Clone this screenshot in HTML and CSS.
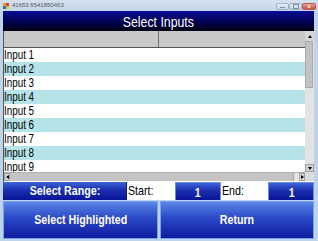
FILE: index.html
```html
<!DOCTYPE html>
<html>
<head>
<meta charset="utf-8">
<link rel="stylesheet" href="styles.css">
</head>
<body>
<div class="titlebar">
  <span class="appicon"><span class="sq a"></span><span class="sq b"></span><span class="sq c"></span><span class="sq d"></span></span>
  <span class="ttext">41653.6541850463</span>
  <span class="wbtns">
    <span class="wb min"><span class="minbar"></span></span>
    <span class="wb max"><span class="maxbox"></span></span>
    <span class="wb close">×</span>
  </span>
</div>
<div class="window">
  <div class="header"><span class="nar c">Select Inputs</span></div>
  <div class="grid">
    <div class="body">
      <div class="colhead"><div class="ch c1"></div><div class="ch c2"></div></div>
      <div class="rows">
        <div class="row"><span class="nar l">Input 1</span></div>
        <div class="row alt"><span class="nar l">Input 2</span></div>
        <div class="row"><span class="nar l">Input 3</span></div>
        <div class="row alt"><span class="nar l">Input 4</span></div>
        <div class="row"><span class="nar l">Input 5</span></div>
        <div class="row alt"><span class="nar l">Input 6</span></div>
        <div class="row"><span class="nar l">Input 7</span></div>
        <div class="row alt"><span class="nar l">Input 8</span></div>
        <div class="row"><span class="nar l">Input 9</span></div>
      </div>
    </div>
    <div class="vscroll">
      <div class="arrow up"><span class="tri-up"></span></div>
      <div class="vthumb"></div>
      <div class="vtrack"></div>
      <div class="arrow down"><span class="tri-down"></span></div>
    </div>
    <div class="hscroll">
      <div class="harrow"><span class="tri-left"></span></div>
      <div class="hthumb"></div>
      <div class="htrack"></div>
      <div class="harrow"><span class="tri-right"></span></div>
    </div>
    <div class="corner"></div>
  </div>
  <div class="range">
    <div class="rlabel"><span class="nar c">Select Range:</span></div>
    <div class="rfield"><span class="nar l">Start:</span></div>
    <div class="rval"><span class="nar c">1</span></div>
    <div class="rfield"><span class="nar l">End:</span></div>
    <div class="rval"><span class="nar c">1</span></div>
  </div>
  <div class="buttons">
    <div class="btn"><span class="nar c">Select Highlighted</span></div>
    <div class="btn"><span class="nar c">Return</span></div>
  </div>
</div>
</body>
</html>
```
FILE: styles.css
```css
html, body {
  margin: 0;
  padding: 0;
}
body {
  width: 318px;
  height: 241px;
  overflow: hidden;
  background: #bcd3ea;
  font-family: "Liberation Sans", Arial, sans-serif;
}
.nar {
  display: inline-block;
  white-space: nowrap;
  transform: scaleX(0.82);
}
.nar.l {
  transform-origin: left center;
}
.nar.c {
  transform-origin: center center;
}
.titlebar {
  height: 11px;
  display: flex;
  align-items: center;
  background: linear-gradient(#d3e1ef, #c4d6ea);
}
.appicon {
  width: 6px;
  height: 6px;
  margin-left: 3px;
  display: grid;
  grid-template-columns: 3px 3px;
  grid-template-rows: 3px 3px;
}
.sq.a { background: #e8a020; }
.sq.b { background: #d04040; }
.sq.c { background: #3070d0; }
.sq.d { background: #e8c030; }
.ttext {
  font-size: 6px;
  color: #555;
  margin-left: 3px;
  line-height: 11px;
}
.wbtns {
  margin-left: auto;
  margin-right: 2px;
  display: flex;
  align-self: flex-start;
  margin-top: 3px;
}
.wb {
  width: 13px;
  height: 7px;
  box-sizing: border-box;
  border: 1px solid #9fb3c9;
  border-radius: 2px;
  background: linear-gradient(#e6eef6, #c8d6e6);
  display: flex;
  align-items: center;
  justify-content: center;
}
.wb.close {
  width: 14px;
  background: linear-gradient(#e6a090, #c85040);
  border-color: #b06050;
  color: #fff;
  font-size: 7px;
  line-height: 7px;
}
.minbar {
  width: 5px;
  height: 1px;
  background: #7d90a5;
  margin-top: 2px;
}
.maxbox {
  width: 4px;
  height: 3px;
  border: 1px solid #7d90a5;
}
.window {
  padding: 0 4px 0 3px;
}
.header {
  height: 20px;
  background: linear-gradient(#0a0c96, #00004a 60%, #000010);
  color: #fff;
  font-size: 15px;
  line-height: 21px;
  text-align: center;
}
.grid {
  height: 151px;
  display: grid;
  grid-template-columns: 1fr 9px;
  grid-template-rows: 141px 9px;
  border-left: 1px solid #555;
  background: #fff;
  box-sizing: border-box;
  padding-bottom: 1px;
}
.body {
  overflow: hidden;
  display: flex;
  flex-direction: column;
}
.colhead {
  height: 16px;
  flex: none;
  display: flex;
  background: #c8c8c8;
  border-bottom: 1px solid #555;
}
.ch.c1 {
  width: 154px;
  border-right: 1px solid #707070;
}
.ch.c2 {
  flex: 1;
}
.rows {
  display: flex;
  flex-direction: column;
}
.row {
  height: 14px;
  flex: none;
  font-size: 12px;
  line-height: 15px;
  color: #000;
  background: #fff;
  overflow: hidden;
}
.row:last-child {
  height: 12px;
}
.row.alt {
  background: #b6e3e8;
}
.vscroll {
  display: flex;
  flex-direction: column;
  background: #e3e3e3;
}
.arrow {
  height: 9px;
  flex: none;
  display: flex;
  align-items: center;
  justify-content: center;
}
.arrow.up {
  height: 10px;
  background: #d6d6d6;
}
.vthumb {
  height: 47px;
  flex: none;
  background: #c2c2c2;
  border: 1px solid #a8a8a8;
  box-sizing: border-box;
  margin-right: 1px;
}
.vtrack {
  flex: 1;
}
.arrow.down {
  height: 8px;
  background: #d0d0d0;
  border: 1px solid #a0a0a0;
  box-sizing: border-box;
}
.tri-up {
  width: 0; height: 0;
  border-left: 2px solid transparent;
  border-right: 2px solid transparent;
  border-bottom: 3px solid #000;
}
.tri-down {
  width: 0; height: 0;
  border-left: 2px solid transparent;
  border-right: 2px solid transparent;
  border-top: 3px solid #000;
}
.tri-left {
  width: 0; height: 0;
  border-top: 2px solid transparent;
  border-bottom: 2px solid transparent;
  border-right: 3px solid #000;
}
.tri-right {
  width: 0; height: 0;
  border-top: 2px solid transparent;
  border-bottom: 2px solid transparent;
  border-left: 3px solid #000;
}
.hscroll {
  display: flex;
  background: #e3e3e3;
  border-top: 1px solid #b0b0b0;
}
.harrow {
  width: 6px;
  flex: none;
  background: #d6d6d6;
  border: 1px solid #a0a0a0;
  box-sizing: border-box;
  display: flex;
  align-items: center;
  justify-content: center;
}
.hthumb {
  width: 283px;
  flex: none;
  background: #c4c4c4;
  border-right: 1px solid #a8a8a8;
}
.htrack {
  flex: 1;
}
.corner {
  background: #dcdcdc;
}
.range {
  height: 18px;
  display: flex;
  font-size: 13px;
}
.rlabel {
  width: 124px;
  background: linear-gradient(#3d64d8, #1a2fb0 45%, #0a1496);
  color: #fff;
  font-weight: bold;
  text-align: center;
  line-height: 18px;
  border-right: 1px solid #0b148c;
}
.rfield {
  width: 47px;
  background: #fff;
  color: #000;
  line-height: 17px;
  padding-left: 1px;
}
.rval {
  width: 46px;
  background: linear-gradient(#3d64d8, #1a2fb0 45%, #0a1496);
  color: #fff;
  font-weight: bold;
  text-align: center;
  line-height: 19px;
  box-sizing: border-box;
  border: 1px solid #6a8be0;
  border-bottom: none;
}
.buttons {
  margin-top: 1px;
  height: 38px;
  display: flex;
  gap: 2px;
}
.btn {
  flex: 1;
  box-sizing: border-box;
  border: 1px solid #7aa0ee;
  background: linear-gradient(#5a86e6, #2a48c6 45%, #0f1ca0);
  color: #fff;
  font-weight: bold;
  font-size: 13px;
  display: flex;
  align-items: center;
  justify-content: center;
  padding-bottom: 1px;
}
```
